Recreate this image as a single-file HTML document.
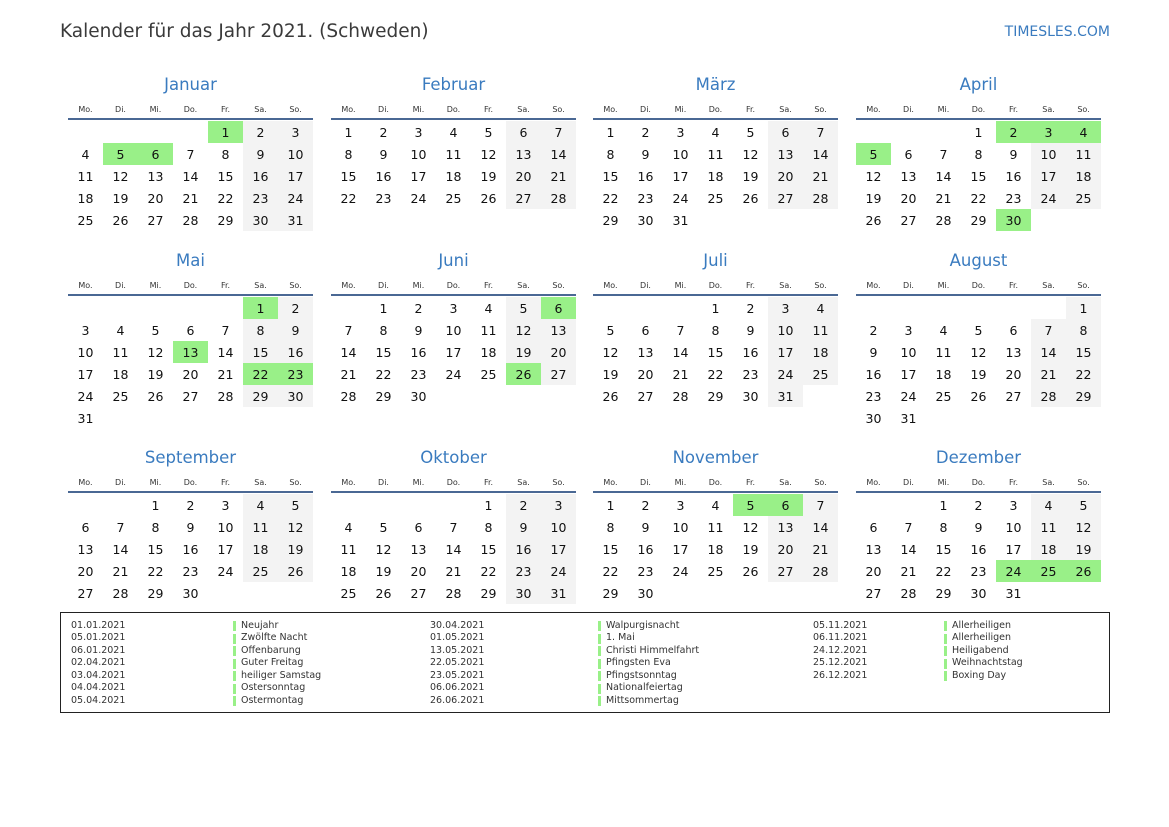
<!DOCTYPE html>
<html><head><meta charset="utf-8">
<style>
body{margin:0;width:1169px;height:827px;background:#fff;position:relative;font-family:"DejaVu Sans","Liberation Sans",sans-serif;overflow:hidden}
.a{position:absolute;white-space:nowrap}
.t{font-size:16.5px;color:#3a7bbf;text-align:center;width:245px}
.h{font-size:8px;color:#333;text-align:center;width:35px}
.c{font-size:12.5px;color:#111;text-align:center;width:35px;height:22px;line-height:23px}
.g{background:#f3f3f3}.x{background:#99f088}
.ln{height:2px;background:#4a6894;width:245px}
.lg{font-size:9.5px;color:#333;line-height:12.5px}
.b{position:absolute;width:3px;height:10px;background:#99f088}
</style></head><body>
<div class="a" style="left:60px;top:21px;font-size:18.5px;color:#3a3a3a">Kalender für das Jahr 2021. (Schweden)</div>
<div class="a" style="right:59px;top:24px;font-size:14px;color:#3a7bbf">TIMESLES.COM</div>
<div id="cal"></div>
<div class="a" style="left:60px;top:612px;width:1048px;height:99px;border:1px solid #222"></div>
<div id="leg"></div>
<script>
var names=["Januar","Februar","März","April","Mai","Juni","Juli","August","September","Oktober","November","Dezember"];
var days=["Mo.","Di.","Mi.","Do.","Fr.","Sa.","So."];
var hol={0:[1,5,6],3:[2,3,4,5,30],4:[1,13,22,23],5:[6,26],10:[5,6],11:[24,25,26]};
var xs=[68,331,593,856],ls=[119,295,492];
var h="";
for(var m=0;m<12;m++){
 var x=xs[m%4],L=ls[Math.floor(m/4)];
 h+='<div class="a t" style="left:'+x+'px;top:'+(L-44)+'px">'+names[m]+'</div>';
 for(var d=0;d<7;d++)h+='<div class="a h" style="left:'+(x+d*35)+'px;top:'+(L-14)+'px">'+days[d]+'</div>';
 h+='<div class="a ln" style="left:'+x+'px;top:'+(L-1)+'px"></div>';
 var first=(new Date(2021,m,1).getDay()+6)%7,n=new Date(2021,m+1,0).getDate();
 for(var i=1;i<=n;i++){
  var p=first+i-1,c=p%7,r=Math.floor(p/7);
  var cls=(hol[m]&&hol[m].indexOf(i)>=0)?" x":(c>=5?" g":"");
  h+='<div class="a c'+cls+'" style="left:'+(x+c*35)+'px;top:'+(L+2+r*22)+'px">'+i+'</div>';
 }
}
document.getElementById("cal").innerHTML=h;
var cols=[[71,233,[["01.01.2021","Neujahr"],["05.01.2021","Zwölfte Nacht"],["06.01.2021","Offenbarung"],["02.04.2021","Guter Freitag"],["03.04.2021","heiliger Samstag"],["04.04.2021","Ostersonntag"],["05.04.2021","Ostermontag"]]],
[430,598,[["30.04.2021","Walpurgisnacht"],["01.05.2021","1. Mai"],["13.05.2021","Christi Himmelfahrt"],["22.05.2021","Pfingsten Eva"],["23.05.2021","Pfingstsonntag"],["06.06.2021","Nationalfeiertag"],["26.06.2021","Mittsommertag"]]],
[813,944,[["05.11.2021","Allerheiligen"],["06.11.2021","Allerheiligen"],["24.12.2021","Heiligabend"],["25.12.2021","Weihnachtstag"],["26.12.2021","Boxing Day"]]]];
var g="";
cols.forEach(function(k){k[2].forEach(function(e,i){var y=619.5+i*12.5;
 g+='<div class="a lg" style="left:'+k[0]+'px;top:'+y+'px">'+e[0]+'</div>';
 g+='<div class="b" style="left:'+k[1]+'px;top:'+(y+1.5)+'px"></div>';
 g+='<div class="a lg" style="left:'+(k[1]+8)+'px;top:'+y+'px">'+e[1]+'</div>';});});
document.getElementById("leg").innerHTML=g;
</script>
</body></html>
